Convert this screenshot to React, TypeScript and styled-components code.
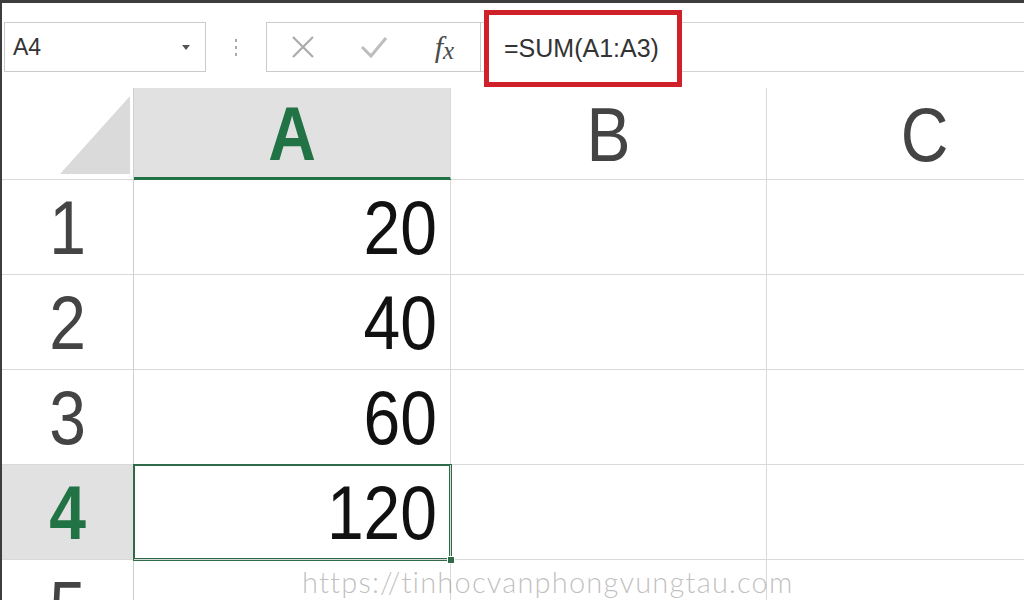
import React from "react";
import styled, { createGlobalStyle, css } from "styled-components";

const GlobalStyle = createGlobalStyle`
  html, body {
    margin: 0;
    padding: 0;
    background: #fff;
    font-family: "Liberation Sans", Arial, sans-serif;
  }
`;

const GREEN = "#217346";
const SELECT = "#2f6a49";
const GRID = "#d9d9d9";

const Frame = styled.div`
  position: relative;
  width: 1024px;
  height: 600px;
  overflow: hidden;
  box-sizing: border-box;
  background: #fff;
  border-top: 3px solid #3d3d3d;
  border-left: 2px solid #3d3d3d;
  display: flex;
  flex-direction: column;
`;

const FormulaBar = styled.div`
  flex-shrink: 0;
  display: flex;
  align-items: stretch;
  height: 50px;
  margin-top: 19px;
  padding-left: 2px;
`;

const NameBox = styled.div`
  width: 202px;
  box-sizing: border-box;
  border: 1px solid #cacaca;
  display: flex;
  align-items: center;
  justify-content: space-between;
  padding: 0 15px 0 8px;
  font-size: 23px;
  color: #333;
`;

const Caret = styled.span`
  width: 0;
  height: 0;
  border-left: 4px solid transparent;
  border-right: 4px solid transparent;
  border-top: 5px solid #555;
`;

const Grip = styled.div`
  width: 60px;
  display: flex;
  flex-direction: column;
  align-items: center;
  justify-content: center;
  gap: 4px;
`;

const Dot = styled.span`
  width: 2px;
  height: 3px;
  background: #a9a9a9;
`;

const IconBox = styled.div`
  width: 215px;
  box-sizing: border-box;
  border: 1px solid #cacaca;
  display: flex;
  align-items: center;
`;

const IconSlot = styled.div`
  width: 72px;
  display: flex;
  align-items: center;
  justify-content: center;
`;

const Fx = styled.span`
  font-family: "Liberation Serif", "Times New Roman", serif;
  font-style: italic;
  font-size: 30px;
  color: #4a4a4a;
  line-height: 1;
  sub {
    font-size: 25px;
    vertical-align: -2px;
  }
`;

const FormulaInput = styled.div`
  flex: 1;
  display: flex;
  align-items: stretch;
  border-top: 1px solid #d3d3d3;
  border-bottom: 1px solid #d3d3d3;
`;

const Highlight = styled.div`
  width: 198px;
  box-sizing: border-box;
  margin: -13px 0 -16px 3px;
  border: 5px solid #d0212b;
  background: #fff;
  display: flex;
  align-items: center;
  padding-left: 15px;
  font-size: 25px;
  color: #333;
`;

const Sheet = styled.div`
  flex-shrink: 0;
  margin-top: 16px;
  display: grid;
  grid-template-columns: 132px 317px 316px 316px;
  grid-template-rows: 92px repeat(5, 95px);
`;

const Corner = styled.div`
  display: flex;
  align-items: flex-end;
  justify-content: flex-end;
  padding: 0 3px 5px 0;
  border-bottom: 1px solid ${GRID};
  border-right: 1px solid #cfcfcf;
`;

const Triangle = styled.div`
  width: 70px;
  height: 78px;
  background: #dadada;
  clip-path: polygon(100% 0, 100% 100%, 0 100%);
`;

const selectedHead = css`
  background: #e1e1e1;
  color: ${GREEN};
  font-weight: bold;
`;

const ColHeader = styled.div<{ $selected?: boolean }>`
  display: flex;
  align-items: center;
  justify-content: center;
  box-sizing: border-box;
  color: #444;
  border-right: 1px solid ${GRID};
  border-bottom: ${(p) => (p.$selected ? `3px solid ${GREEN}` : `1px solid ${GRID}`)};
  ${(p) => p.$selected && selectedHead}
`;

const RowHeader = styled.div<{ $selected?: boolean }>`
  display: flex;
  align-items: center;
  justify-content: center;
  color: #444;
  border-right: 1px solid #cfcfcf;
  border-bottom: 1px solid ${GRID};
  ${(p) => p.$selected && selectedHead}
`;

const Cell = styled.div<{ $active?: boolean }>`
  position: relative;
  display: flex;
  align-items: center;
  justify-content: flex-end;
  padding-right: 13px;
  color: #111;
  border-right: 1px solid ${GRID};
  border-bottom: 1px solid ${GRID};
  ${(p) =>
    p.$active &&
    css`
      z-index: 1;
      box-shadow: 0 0 0 1px ${SELECT}, inset 0 0 0 1px ${SELECT};
      &::after {
        content: "";
        position: absolute;
        right: -5px;
        bottom: -5px;
        width: 6px;
        height: 6px;
        background: ${SELECT};
        border: 1px solid #fff;
      }
    `}
`;

const Big = styled.span`
  display: inline-block;
  font-size: 66px;
  line-height: 1;
  transform: scaleY(1.16);
`;

const Watermark = styled.div`
  position: absolute;
  left: 300px;
  top: 564px;
  font-family: Lato, "Liberation Sans", sans-serif;
  font-weight: 300;
  font-size: 29px;
  line-height: 1;
  letter-spacing: 1.2px;
  color: rgba(150, 150, 150, 0.6);
  pointer-events: none;
`;

const columns = ["A", "B", "C"];
const values: Record<number, string> = { 1: "20", 2: "40", 3: "60", 4: "120" };
const activeRow = 4;

const CrossIcon = () => (
  <svg width="26" height="26" viewBox="0 0 26 26">
    <path d="M3 3 L23 23 M23 3 L3 23" stroke="#ababab" strokeWidth="2.2" fill="none" />
  </svg>
);

const CheckIcon = () => (
  <svg width="28" height="24" viewBox="0 0 28 24">
    <path d="M2 12 L11 21 L26 3" stroke="#bdbdbd" strokeWidth="3" fill="none" />
  </svg>
);

export default function App() {
  return (
    <>
      <GlobalStyle />
      <Frame>
        <FormulaBar>
          <NameBox>
            A4
            <Caret />
          </NameBox>
          <Grip>
            <Dot />
            <Dot />
            <Dot />
          </Grip>
          <IconBox>
            <IconSlot>
              <CrossIcon />
            </IconSlot>
            <IconSlot>
              <CheckIcon />
            </IconSlot>
            <IconSlot>
              <Fx>
                f<sub>x</sub>
              </Fx>
            </IconSlot>
          </IconBox>
          <FormulaInput>
            <Highlight>=SUM(A1:A3)</Highlight>
          </FormulaInput>
        </FormulaBar>

        <Sheet>
          <Corner>
            <Triangle />
          </Corner>
          {columns.map((c) => (
            <ColHeader key={c} $selected={c === "A"}>
              <Big>{c}</Big>
            </ColHeader>
          ))}
          {[1, 2, 3, 4, 5].map((r) => (
            <React.Fragment key={r}>
              <RowHeader $selected={r === activeRow}>
                <Big>{r}</Big>
              </RowHeader>
              <Cell $active={r === activeRow}>
                <Big>{values[r] ?? ""}</Big>
              </Cell>
              <Cell />
              <Cell />
            </React.Fragment>
          ))}
        </Sheet>

        <Watermark>https://tinhocvanphongvungtau.com</Watermark>
      </Frame>
    </>
  );
}
